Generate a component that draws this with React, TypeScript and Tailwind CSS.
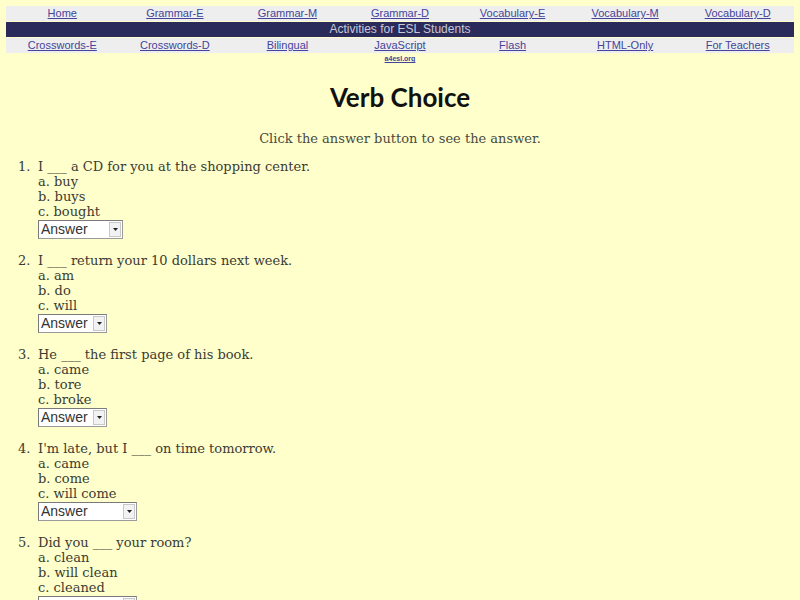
import React from 'react';

const topLinks = ['Home', 'Grammar-E', 'Grammar-M', 'Grammar-D', 'Vocabulary-E', 'Vocabulary-M', 'Vocabulary-D'];
const bottomLinks = ['Crosswords-E', 'Crosswords-D', 'Bilingual', 'JavaScript', 'Flash', 'HTML-Only', 'For Teachers'];

const questions = [
    { q: 'I ___ a CD for you at the shopping center.', choices: ['buy', 'buys', 'bought'], w: 'w-[85px]' },
    { q: 'I ___ return your 10 dollars next week.', choices: ['am', 'do', 'will'], w: 'w-[69px]' },
    { q: 'He ___ the first page of his book.', choices: ['came', 'tore', 'broke'], w: 'w-[69px]' },
    { q: "I'm late, but I ___ on time tomorrow.", choices: ['came', 'come', 'will come'], w: 'w-[99px]' },
    { q: 'Did you ___ your room?', choices: ['clean', 'will clean', 'cleaned'], w: 'w-[99px]' },
];

function AnswerSelect({ w }: { w: string }) {
    return (
        <div className={`${w} h-[19px] mt-[1px] flex items-stretch bg-white border border-[#9a9a9a] border-t-[#7a7a7a] border-l-[#7a7a7a]`}>
            <span className="flex-1 pl-[2px] text-[14px] leading-[17px] text-[#333] font-['Liberation_Sans',sans-serif]">Answer</span>
            <span className="w-[12px] my-[1px] mr-[1px] bg-[#f2f2f2] border border-[#c8c8c8] flex items-center justify-center">
                <svg width="5" height="3" viewBox="0 0 5 3"><path d="M0 0h5L2.5 3z" fill="#222" /></svg>
            </span>
        </div>
    );
}

export default function App() {
    return (
        <div className="min-h-[600px] bg-[#ffffcc] pt-[6px] font-['DejaVu_Serif',serif] text-[#3b3b33]">
            {/* Nav */}
            <div className="mx-[6px] flex flex-col gap-[1px] font-['Liberation_Sans',Arial,sans-serif] text-[11px]">
                <div className="grid grid-cols-7 h-[15px] bg-[#eeeeee] leading-[15px]">
                    {topLinks.map((l) => (
                        <a key={l} className="text-center text-[#44449a] underline">{l}</a>
                    ))}
                </div>
                <div className="h-[15px] bg-[#2b2b5b] text-center text-[12px] leading-[15px] text-[#c8c8d8]">
                    Activities for ESL Students
                </div>
                <div className="grid grid-cols-7 h-[15px] bg-[#eeeeee] leading-[15px]">
                    {bottomLinks.map((l) => (
                        <a key={l} className="text-center text-[#44449a] underline">{l}</a>
                    ))}
                </div>
                <div className="grid grid-cols-7">
                    <span className="col-start-4 text-center text-[7px] leading-[9px] font-bold text-[#44449a] underline">a4esl.org</span>
                </div>
            </div>

            {/* Title */}
            <h1 className="mt-[18px] text-center text-[26px] leading-[32px] font-bold text-[#111] font-['Lato',sans-serif]">
                Verb Choice
            </h1>
            <p className="mt-[18px] text-center text-[13px] leading-[16px] text-[#4a4a40]">
                Click the answer button to see the answer.
            </p>

            {/* Questions */}
            <ol className="mt-[12px] pl-[38px] text-[13px] leading-[15px]">
                {questions.map((item, i) => (
                    <li key={i} className="relative mb-[14px]">
                        <span className="absolute -left-[20px]">{i + 1}.</span>
                        <div>{item.q}</div>
                        {item.choices.map((c, j) => (
                            <div key={c}>{'abc'[j]}. {c}</div>
                        ))}
                        <AnswerSelect w={item.w} />
                    </li>
                ))}
            </ol>
        </div>
    );
}
